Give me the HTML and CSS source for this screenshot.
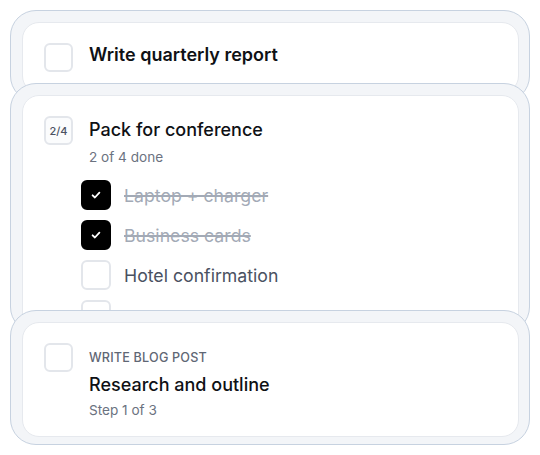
FILE: index.html
```html
<!DOCTYPE html>
<html>
<head>
<meta charset="utf-8">
<link rel="stylesheet" href="styles.css">
</head>
<body>
<div class="stack">
  <div class="card card-1">
    <div class="inner row">
      <span class="box"></span>
      <div class="text t1">
        <div class="title bold">Write quarterly report</div>
      </div>
    </div>
  </div>

  <div class="card card-2">
    <div class="inner">
      <div class="row">
        <span class="box badge">2/4</span>
        <div class="text t2">
          <div class="title">Pack for conference</div>
          <div class="sub">2 of 4 done</div>
        </div>
      </div>
      <ul class="items">
        <li class="item done"><span class="cb checked"><svg viewBox="0 0 12 12" width="12" height="12"><path d="M2.6 6.3 L4.9 8.5 L9.4 3.6" fill="none" stroke="#fff" stroke-width="1.8" stroke-linecap="round" stroke-linejoin="round"/></svg></span><span class="label">Laptop + charger</span></li>
        <li class="item done"><span class="cb checked"><svg viewBox="0 0 12 12" width="12" height="12"><path d="M2.6 6.3 L4.9 8.5 L9.4 3.6" fill="none" stroke="#fff" stroke-width="1.8" stroke-linecap="round" stroke-linejoin="round"/></svg></span><span class="label">Business cards</span></li>
        <li class="item"><span class="cb"></span><span class="label">Hotel confirmation</span></li>
        <li class="item"><span class="cb"></span><span class="label low">Presentation slides</span></li>
      </ul>
    </div>
  </div>

  <div class="card card-3">
    <div class="inner row">
      <span class="box"></span>
      <div class="text t3">
        <div class="eyebrow">WRITE BLOG POST</div>
        <div class="title">Research and outline</div>
        <div class="sub">Step 1 of 3</div>
      </div>
    </div>
  </div>
</div>
</body>
</html>
```

FILE: styles.css
```css
* { box-sizing: border-box; }
html, body { margin: 0; padding: 0; background: #ffffff; }
body {
  font-family: Inter, "Noto Sans", sans-serif;
  color: #111318;
  -webkit-font-smoothing: antialiased;
}
.stack {
  padding: 10px 10px 0 10px;
  display: flex;
  flex-direction: column;
}
.card {
  position: relative;
  border: 1px solid #c7d2e0;
  background: #f3f5f8;
  border-radius: 26px;
  padding: 11px 10px 7px 11px;
}
.inner {
  background: #ffffff;
  border: 1px solid #e6e9ee;
  border-radius: 17px;
  padding: 20px 21px 20px 21px;
}
.row {
  display: flex;
  align-items: flex-start;
  gap: 16px;
}
.card-1 { height: 92px; }
.card-2 { margin-top: -19px; height: 250px; overflow: hidden; }
.card-2 .inner { height: 260px; }
.card-3 { margin-top: -23px; }
.card-3 .inner { padding-bottom: 17px; }
.box {
  flex: none;
  width: 29px;
  height: 29px;
  border: 2px solid #e3e6eb;
  border-radius: 6px;
  background: #fff;
}
.badge {
  display: flex;
  align-items: center;
  justify-content: center;
  font-size: 11px;
  font-weight: 500;
  color: #4b5262;
  background: #fbfcfd;
}
.title {
  font-size: 18px;
  line-height: 24px;
  font-weight: 500;
  color: #0f1115;
}
.title.bold { font-weight: 600; }
.t1 { padding-top: 0; }
.t2 { padding-top: 2px; }
.sub {
  font-size: 13.6px;
  line-height: 18px;
  color: #6b7280;
  margin-top: 6px;
}
.t3 { padding-top: 7px; }
.eyebrow {
  font-size: 12.6px;
  line-height: 16px;
  font-weight: 500;
  letter-spacing: 0.2px;
  color: #5f6775;
}
.t3 .title { margin-top: 7px; }
.t3 .sub { margin-top: 4px; }
.items {
  list-style: none;
  margin: 14px 0 0 0;
  padding: 0 0 0 37px;
  display: flex;
  flex-direction: column;
  gap: 10px;
}
.item {
  display: flex;
  align-items: center;
  gap: 13px;
  height: 30px;
}
.cb {
  flex: none;
  width: 30px;
  height: 30px;
  border: 2px solid #e3e6eb;
  border-radius: 6px;
  display: flex;
  align-items: center;
  justify-content: center;
}
.cb.checked { background: #000; border-color: #000; }
.label {
  font-size: 17.7px;
  color: #4a5161;
}
.label.low { padding-top: 6px; }
.done .label {
  color: #a3aab6;
  text-decoration: line-through;
  text-decoration-thickness: 1.5px;
}
```
